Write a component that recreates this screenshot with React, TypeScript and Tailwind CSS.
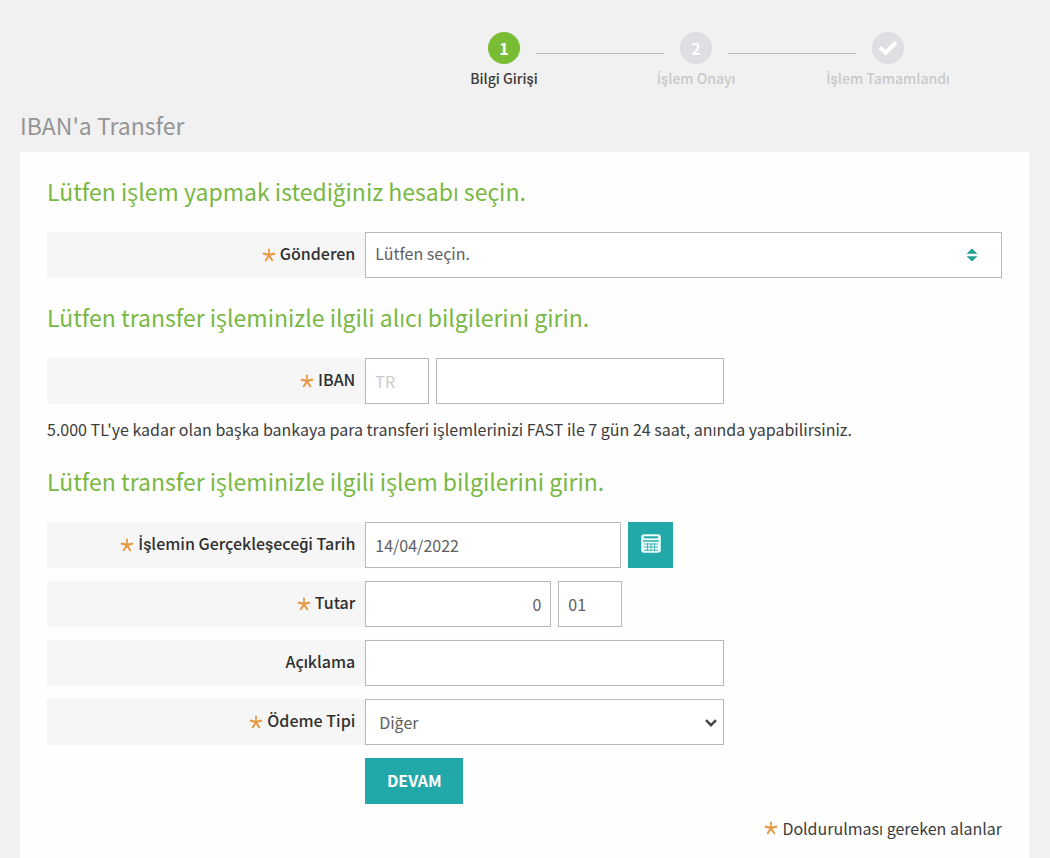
import type { ReactNode } from "react"
import clsx from "clsx"

interface FormRowProps {
  label: ReactNode
  htmlFor: string
  required?: boolean
  children: ReactNode
}

const fieldClass = "h-[46px] border border-[#b8b8b8] bg-white px-[9px] text-base text-[#606060] outline-none focus:border-[#23a8a9]"

// Open Sans has no medium cut, so medium text takes its Turkish letters from Roboto
const mediumClass = "font-['Noto_Sans_CJK_SC','Roboto',sans-serif] font-medium"

export default function App() {
  return (
    <div
      lang="tr"
      className="flex min-h-screen flex-col bg-[#f1f1f1] pt-8 pr-[21px] pl-5 font-['Noto_Sans_CJK_SC','Open_Sans',sans-serif] text-base text-[#3c3c3c]"
    >
      <Stepper />

      <h1 className="mt-[22px] mb-[13px] text-[23px] leading-7 text-[#959595]">IBAN'a Transfer</h1>

      <form className="flex-1 bg-[#fefefe] px-[27px] pt-6 pb-4" onSubmit={(e) => e.preventDefault()}>
        <SectionTitle>Lütfen işlem yapmak istediğiniz hesabı seçin.</SectionTitle>
        <FormRow label="Gönderen" htmlFor="sender" required>
          <div className="relative flex-1">
            <select id="sender" className={clsx(fieldClass, "w-full appearance-none pb-1")}>
              <option>Lütfen seçin.</option>
            </select>
            <SortIcon />
          </div>
        </FormRow>

        <SectionTitle>Lütfen transfer işleminizle ilgili alıcı bilgilerini girin.</SectionTitle>
        <FormRow label="IBAN" htmlFor="iban" required>
          <input aria-label="Ülke kodu" placeholder="TR" className={clsx(fieldClass, "w-16 placeholder:text-[#cccccc]")} />
          <input id="iban" className={clsx(fieldClass, "w-72")} />
        </FormRow>
        <p className="mb-[25px] leading-6">
          5.000 TL'ye kadar olan başka bankaya para transferi işlemlerinizi FAST ile 7 gün 24 saat, anında yapabilirsiniz.
        </p>

        <SectionTitle>Lütfen transfer işleminizle ilgili işlem bilgilerini girin.</SectionTitle>
        <FormRow label={<><DottedI />şlemin Gerçekleşeceği Tarih</>} htmlFor="date" required>
          <input id="date" defaultValue="14/04/2022" className={clsx(fieldClass, "w-64")} />
          <button type="button" aria-label="Takvim" className="flex h-[46px] w-[45px] justify-center bg-[#23a8a9] pt-3">
            <CalendarIcon />
          </button>
        </FormRow>
        <FormRow label="Tutar" htmlFor="amount" required>
          <input id="amount" defaultValue="0" className={clsx(fieldClass, "w-[186px] text-right")} />
          <input aria-label="Kuruş" defaultValue="01" className={clsx(fieldClass, "w-16")} />
        </FormRow>
        <FormRow label="Açıklama" htmlFor="description">
          <input id="description" className={clsx(fieldClass, "w-[359px]")} />
        </FormRow>
        <FormRow label="Ödeme Tipi" htmlFor="payment-type" required>
          <div className="relative w-[359px]">
            <select id="payment-type" className={clsx(fieldClass, "w-full appearance-none pl-[13px]")}>
              <option>Diğer</option>
            </select>
            <ChevronIcon />
          </div>
        </FormRow>

        <div className="ml-[33.333%]">
          <button type="submit" className="h-[46px] w-[98px] bg-[#23a8a9] pb-0.5 font-bold text-white">
            DEVAM
          </button>
        </div>

        <p className="mt-3 flex items-center justify-end gap-1 leading-6">
          <RequiredMark />
          Doldurulması gereken alanlar
        </p>
      </form>
    </div>
  )
}

// The CJK family has no capital dotted I of its own
function DottedI() {
  return <span className="font-['Open_Sans',sans-serif] font-semibold">İ</span>
}

function Stepper() {
  return (
    <ol className={clsx(mediumClass, "mr-[45px] flex justify-end text-center text-sm")}>
      <Step label="Bilgi Girişi" active first>
        1
      </Step>
      <Step label={<><DottedI />şlem Onayı</>}>2</Step>
      <Step label={<><DottedI />şlem Tamamlandı</>} last>
        <svg viewBox="0 0 20 16" className="h-4 w-5" fill="none" stroke="currentColor" strokeWidth="4">
          <path d="M2 7.5 7.5 13 18 2.5" />
        </svg>
      </Step>
    </ol>
  )
}

interface StepProps {
  label: ReactNode
  active?: boolean
  first?: boolean
  last?: boolean
  children: ReactNode
}

function Step({ label, active, first, last, children }: StepProps) {
  return (
    <li className="w-48">
      <div className="flex">
        <span className={clsx("mt-[21px] h-px flex-1", !first && "bg-[#b9b9b9]")} />
        <span
          className={clsx(
            "mx-4 flex h-8 w-8 items-center justify-center rounded-full text-base font-bold text-white",
            active ? "bg-[#78bd33]" : "bg-[#dedee3]",
          )}
        >
          {children}
        </span>
        <span className={clsx("mt-[21px] h-px flex-1", !last && "bg-[#b9b9b9]")} />
      </div>
      <div className={clsx("mt-1 leading-5", active ? "text-[#3c3c3c]" : "text-[#c9c9c9]")}>{label}</div>
    </li>
  )
}

function SectionTitle({ children }: { children: ReactNode }) {
  return <h2 className="mb-[26px] text-[23px] leading-[30px] text-[#78b843] not-first:mt-6">{children}</h2>
}

function FormRow({ label, htmlFor, required, children }: FormRowProps) {
  return (
    <div className="mb-[13px] flex">
      <div className="flex h-[46px] w-1/3 items-center justify-end gap-1 bg-[#f6f6f6] pr-[10px]">
        {required && <RequiredMark />}
        <label htmlFor={htmlFor} className={clsx(mediumClass, "pb-1 text-[#303030]")}>
          {label}
        </label>
      </div>
      <div className="flex flex-1 gap-[7px]">{children}</div>
    </div>
  )
}

function RequiredMark() {
  return (
    <svg viewBox="0 0 14 14" className="h-[14px] w-[14px] text-[#e49a45]" fill="currentColor" aria-hidden="true">
      <path d="M6 .8h2l-.3 4.7 5.2-.9.5 1.8-4.9 1.4 3 4.6-1.6 1L7 9.2l-2.9 4.2-1.6-1 3-4.6L.6 6.4l.5-1.8 5.2.9z" />
    </svg>
  )
}

// Up and down triangles of the account picker
function SortIcon() {
  return (
    <svg viewBox="0 0 12 14" className="pointer-events-none absolute top-4 right-6 h-[14px] w-3 fill-[#1fa193]" aria-hidden="true">
      <path d="M6 0.5 11.5 5.8H.5zM6 13.5.5 8.2h11z" />
    </svg>
  )
}

function ChevronIcon() {
  return (
    <svg viewBox="0 0 12 8" className="pointer-events-none absolute top-5 right-[7px] h-2 w-3" fill="none" stroke="#444444" strokeWidth="2.4" aria-hidden="true">
      <path d="M1 1.2 6 6.2l5-5" />
    </svg>
  )
}

function CalendarIcon() {
  return (
    <svg viewBox="0 0 20 19" className="h-[19px] w-5" aria-hidden="true">
      <rect x="1" y="1" width="18" height="17" rx="2" fill="#e9fbfa" stroke="#e9fbfa" strokeWidth="1.6" />
      <path d="M3 3.3h14" stroke="#23a8a9" strokeWidth="2" />
      <path d="M2 7h16" stroke="#23a8a9" strokeWidth="1.4" />
      <path d="M3 10h14M3 13h14M3 16.3h14M6.5 9v8M10 9v8M13.5 9v8" stroke="#23a8a9" strokeWidth=".8" />
    </svg>
  )
}
